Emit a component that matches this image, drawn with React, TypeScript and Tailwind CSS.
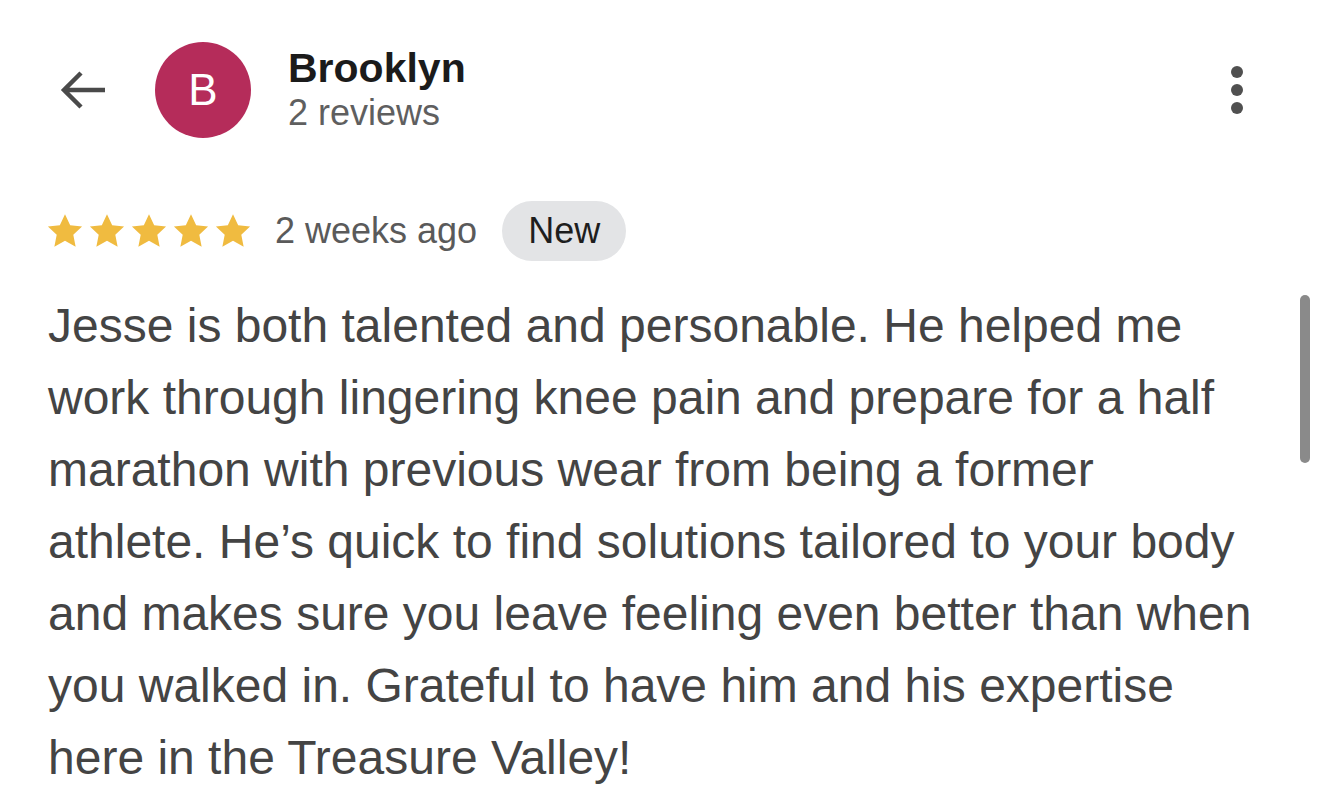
import React from 'react';

const Star: React.FC = () => (
  <svg width="38" height="36" viewBox="0 0 24 23" className="shrink-0">
    <path d="M12 0.8l3.3 7 7.6 0.9-5.6 5.2 1.5 7.6L12 17.7l-6.8 3.8 1.5-7.6L1.1 8.7l7.6-0.9z" fill="#f0bb40" />
  </svg>
);

const App: React.FC = () => {
  return (
    <div className="w-[1319px] h-[811px] bg-white relative overflow-hidden" style={{ fontFamily: '"Liberation Sans", Arial, sans-serif' }}>
      {/* Header */}
      <div className="flex items-center h-[96px] mt-[42px] pl-[58px] pr-[76px]">
        <svg width="50" height="50" viewBox="0 0 50 50" className="shrink-0">
          <path d="M47 25H6M23 8L6 25l17 17" fill="none" stroke="#4a4a4a" strokeWidth="4.5" />
        </svg>
        <div className="ml-[47px] w-[96px] h-[96px] rounded-full bg-[#b52c5a] flex items-center justify-center text-white text-[44px] shrink-0">
          B
        </div>
        <div className="ml-[37px] flex flex-col">
          <div className="text-[41px] font-bold text-[#1b1b1b] leading-[46px]">Brooklyn</div>
          <div className="text-[36px] text-[#5f5f5f] leading-[44px]">2 reviews</div>
        </div>
        <div className="ml-auto flex flex-col gap-[6px]">
          <div className="w-[12px] h-[12px] rounded-full bg-[#505050]" />
          <div className="w-[12px] h-[12px] rounded-full bg-[#505050]" />
          <div className="w-[12px] h-[12px] rounded-full bg-[#505050]" />
        </div>
      </div>

      {/* Rating row */}
      <div className="flex items-center mt-[63px] pl-[46px]">
        <div className="flex gap-[4px]">
          <Star />
          <Star />
          <Star />
          <Star />
          <Star />
        </div>
        <div className="ml-[23px] text-[36px] text-[#5a5a5a]">2 weeks ago</div>
        <div className="ml-[25px] h-[60px] px-[26px] rounded-full bg-[#e3e4e6] flex items-center text-[36px] text-[#1e1e1e]">
          New
        </div>
      </div>

      {/* Review */}
      <p className="mt-[29px] ml-[48px] w-[1212px] text-[48px] leading-[72px] text-[#444444]">
        Jesse is both talented and personable. He helped me work through lingering knee pain and prepare for a half marathon with previous wear from being a former athlete. He’s quick to find solutions tailored to your body and makes sure you leave feeling even better than when you walked in. Grateful to have him and his expertise here in the Treasure Valley!
      </p>

      {/* Scrollbar */}
      <div className="absolute left-[1300px] top-[295px] w-[10px] h-[168px] rounded-full bg-[#8a8a8a]" />
    </div>
  );
};

export default App;
